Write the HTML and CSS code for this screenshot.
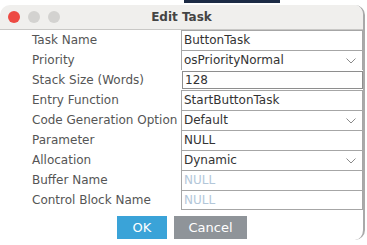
FILE: index.html
```html
<!DOCTYPE html>
<html lang="en">
<head>
    <meta charset="UTF-8">
    <title>Edit Task</title>
    <link rel="stylesheet" href="styles.css">
</head>
<body>
    <div class="desktop"><span class="peek"></span></div>
    <div class="window">
        <div class="titlebar">
            <div class="lights">
                <span class="light red"></span>
                <span class="light"></span>
                <span class="light"></span>
            </div>
            <div class="title">Edit Task</div>
        </div>
        <div class="form">
            <label>Task Name</label>
            <div class="field input">ButtonTask</div>

            <label>Priority</label>
            <div class="field select">osPriorityNormal<svg class="caret" viewBox="0 0 10 6"><path d="M0.5 0.5 L5 5 L9.5 0.5"/></svg></div>

            <label>Stack Size (Words)</label>
            <div class="field input focus">128</div>

            <label>Entry Function</label>
            <div class="field input">StartButtonTask</div>

            <label>Code Generation Option</label>
            <div class="field select">Default<svg class="caret" viewBox="0 0 10 6"><path d="M0.5 0.5 L5 5 L9.5 0.5"/></svg></div>

            <label>Parameter</label>
            <div class="field input">NULL</div>

            <label>Allocation</label>
            <div class="field select">Dynamic<svg class="caret" viewBox="0 0 10 6"><path d="M0.5 0.5 L5 5 L9.5 0.5"/></svg></div>

            <label>Buffer Name</label>
            <div class="field input empty">NULL</div>

            <label>Control Block Name</label>
            <div class="field input empty">NULL</div>
        </div>
        <div class="actions">
            <button class="ok">OK</button>
            <button class="cancel">Cancel</button>
        </div>
    </div>
</body>
</html>
```

FILE: styles.css
```css
* {
    margin: 0;
    padding: 0;
    box-sizing: border-box;
}

body {
    width: 367px;
    height: 245px;
    overflow: hidden;
    background: #ffffff;
    font-family: 'DejaVu Sans', sans-serif;
}

.desktop {
    height: 5px;
    padding-left: 184px;
}

.peek {
    display: block;
    width: 96px;
    height: 3px;
    background: #1d2b45;
}

.window {
    width: 365px;
    height: 235px;
    background: #ffffff;
    border-radius: 10px;
    border-right: 2px solid #a9a9a9;
    overflow: hidden;
}

.titlebar {
    height: 25px;
    background: #f0efed;
    border-bottom: 1px solid #c9c8c6;
    display: flex;
    align-items: center;
    position: relative;
}

.lights {
    display: flex;
    gap: 8px;
    padding-left: 8px;
}

.light {
    width: 12px;
    height: 12px;
    border-radius: 50%;
    background: #d3d2d0;
}

.light.red {
    background: #ed4a43;
}

.title {
    position: absolute;
    left: 0;
    right: 0;
    text-align: center;
    font-size: 12px;
    font-weight: bold;
    color: #444444;
}

.form {
    display: grid;
    grid-template-columns: 181px 182px;
    grid-auto-rows: 20px;
}

label {
    font-size: 12px;
    color: #555555;
    padding-left: 32px;
    line-height: 20px;
    white-space: nowrap;
    overflow: hidden;
}

.field {
    font-size: 12px;
    color: #333333;
    line-height: 18px;
    padding-left: 2px;
    border: 1px solid #a6a6a6;
    border-bottom: none;
    position: relative;
    background: #fff;
}

.field:last-child {
    border-bottom: 1px solid #a6a6a6;
}

.focus {
    border: 1px solid #8e8e8e;
    margin: 1px 0 1px 1px;
    line-height: 16px;
}

.empty {
    color: #b3c7d9;
}

.caret {
    position: absolute;
    right: 6px;
    top: 7px;
    width: 10px;
    height: 6px;
    fill: none;
    stroke: #8a8a8a;
    stroke-width: 1;
}

.actions {
    display: flex;
    gap: 7px;
    padding: 6px 0 0 117px;
}

button {
    border: none;
    height: 23px;
    font-family: 'DejaVu Sans', sans-serif;
    font-size: 13px;
    color: #ffffff;
}

.ok {
    width: 50px;
    background: #3aa3d8;
}

.cancel {
    width: 73px;
    background: #8f9499;
}
```
